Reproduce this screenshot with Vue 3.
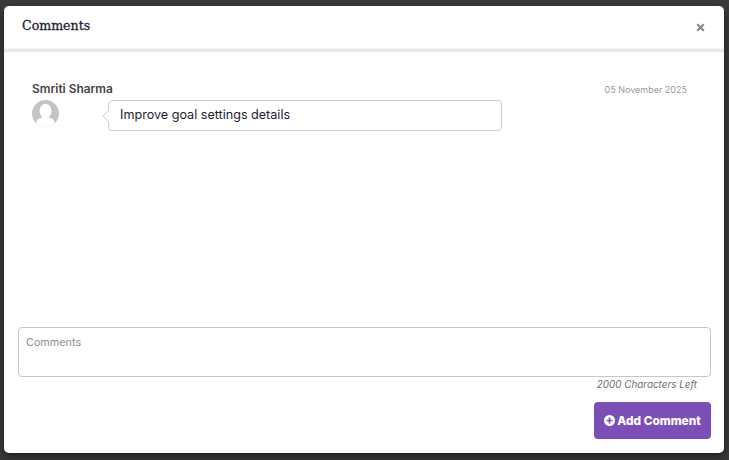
<template>
  <div class="backdrop">
    <div class="modal">
      <div class="modal-head">
        <h4>Comments</h4>
        <svg class="close" width="9" height="9" viewBox="0 0 9 9"><path d="M1.2 1.2 7.8 7.8M7.8 1.2 1.2 7.8" stroke="#8a8a8a" stroke-width="2.2" /></svg>
      </div>
      <div class="modal-body">
        <div class="comment-list">
          <div class="comment" v-for="item in comments" :key="item.date">
            <div class="comment-top">
              <span class="name">{{ item.name }}</span>
              <span class="date">{{ item.date }}</span>
            </div>
            <div class="comment-main">
              <svg class="avatar" width="27" height="27" viewBox="0 0 27 27">
                <defs><clipPath id="av"><circle cx="13.5" cy="13.5" r="13.5" /></clipPath></defs>
                <circle cx="13.5" cy="13.5" r="13.5" fill="#c4c4c4" />
                <g clip-path="url(#av)" fill="#fff">
                  <ellipse cx="13.5" cy="11" rx="6" ry="7.2" />
                  <path d="M10.500 17 5.500 19.500 4 23 6 28H21L23 23 21.500 19.500 16.500 17z" />
                </g>
              </svg>
              <div class="bubble">{{ item.text }}</div>
            </div>
          </div>
        </div>
        <div class="form">
          <textarea placeholder="Comments" v-model="text"></textarea>
          <div class="left">{{ 2000 - text.length }} Characters Left</div>
          <div class="actions">
            <button type="button">
              <svg width="11" height="11" viewBox="0 0 11 11"><circle cx="5.500" cy="5.500" r="5.500" fill="#fff" /><path d="M5.500 2.600v5.800M2.600 5.500h5.800" stroke="#7b4fb5" stroke-width="1.700" /></svg>
              Add Comment
            </button>
          </div>
        </div>
      </div>
    </div>
  </div>
</template>

<script setup>
import { ref } from 'vue'

const text = ref('')
const comments = [
  { name: 'Smriti Sharma', date: '05 November 2025', text: 'Improve goal settings details' }
]
</script>

<style>
html, body {
  margin: 0;
  background: #3a3a3a;
  overflow: hidden;
}
</style>

<style scoped>
.backdrop {
  height: 460px;
  box-sizing: border-box;
  padding: 6px 5px 7px 4px;
  background: #3a3a3a;
  font-family: "Inter", "Liberation Sans", sans-serif;
}

.modal {
  height: 100%;
  background: #fff;
  border-radius: 5px;
  display: flex;
  flex-direction: column;
  box-shadow: 0 3px 9px rgba(0, 0, 0, 0.5);
}

.modal-head {
  height: 43px;
  flex: none;
  border-bottom: 3px solid #e8e8e8;
  box-shadow: inset 0 -1px 1px #f4f4f4;
  display: flex;
  align-items: center;
  justify-content: space-between;
  padding: 0 19px 0 18px;
}

h4 {
  margin: 0 0 4px;
  font-family: "DejaVu Serif", serif;
  font-size: 12.600px;
  font-weight: 400;
  -webkit-text-stroke: 0.3px #1f2433;
  color: #1f2433;
}

.modal-body {
  flex: 1;
  display: flex;
  flex-direction: column;
  padding: 0 13px 14px 14px;
}

.comment-list {
  flex: 1;
  padding: 29px 24px 0 14px;
}

.comment-top {
  display: flex;
  justify-content: space-between;
  align-items: center;
  height: 14px;
  margin-bottom: 5px;
}

.name {
  font-size: 11.900px;
  font-weight: 600;
  color: #444;
}

.date {
  font-size: 9px;
  margin-top: 2px;
  color: #9a9a9a;
}

.comment-main {
  display: flex;
  align-items: flex-start;
  gap: 49px;
}

.bubble {
  position: relative;
  width: 394px;
  height: 31px;
  box-sizing: border-box;
  border: 1px solid #c9ccd3;
  border-radius: 4px;
  padding: 0 11px;
  line-height: 28px;
  font-size: 12.600px;
  color: #1c2230;
}

.bubble::before {
  content: "";
  position: absolute;
  left: -5px;
  top: 11px;
  width: 7px;
  height: 7px;
  background: #fff;
  border-left: 1px solid #dcdde1;
  border-bottom: 1px solid #dcdde1;
  transform: rotate(45deg);
}

.form textarea {
  display: block;
  width: 100%;
  height: 50px;
  box-sizing: border-box;
  border: 1px solid #c6c6c6;
  border-radius: 4px;
  padding: 8px 7px;
  font-family: inherit;
  font-size: 10.800px;
  resize: none;
  outline: none;
}

.form textarea::placeholder {
  color: #8f8f8f;
}

.left {
  text-align: right;
  padding-right: 14px;
  font-size: 9.900px;
  line-height: 14px;
  font-style: italic;
  color: #707070;
}

.actions {
  display: flex;
  justify-content: flex-end;
  margin-top: 11px;
}

button {
  width: 117px;
  height: 37px;
  border: none;
  border-radius: 4px;
  background: #7b4fb5;
  color: #fff;
  font-family: inherit;
  font-size: 11.800px;
  font-weight: 800;
  display: flex;
  align-items: center;
  justify-content: center;
  gap: 2px;
}
</style>
